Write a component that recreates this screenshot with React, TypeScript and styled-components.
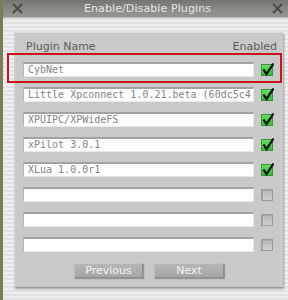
import React from "react";
import styled, { createGlobalStyle } from "styled-components";

const Global = createGlobalStyle`
  html, body { margin: 0; padding: 0; background: #ececec; }
  body { font-family: "DejaVu Sans", sans-serif; }
`;

const Window = styled.div`
  position: relative;
  width: 288px;
  height: 300px;
  overflow: hidden;
  display: flex;
  flex-direction: column;
  border-left: 3px solid #7a7c5a;
  box-sizing: border-box;
  background: repeating-linear-gradient(
    to bottom,
    #efefef 0px,
    #efefef 2px,
    #e2e2e2 2px,
    #e2e2e2 4px
  );
`;

const TitleBar = styled.div`
  height: 17px;
  flex: none;
  display: flex;
  align-items: center;
  justify-content: space-between;
  padding: 0 5px 0 9px;
  background: linear-gradient(to bottom, #75756f, #8c8c87 60%, #96968f);
  border-bottom: 1px solid #b8b8b2;
`;

const Title = styled.div`
  font-family: "DejaVu Sans", sans-serif;
  font-size: 11px;
  color: #e6e6e2;
  line-height: 17px;
  letter-spacing: 0.1px;
`;

const Body = styled.div`
  flex: 1;
  display: flex;
  flex-direction: column;
  padding: 14px 5px 0 11px;
`;

const Panel = styled.div`
  width: 269px;
  height: 255px;
  box-sizing: border-box;
  background: #c9c9c9;
  border-top: 1px solid #dcdcdc;
  border-left: 1px solid #d6d6d6;
  box-shadow: 1px 2px 2px rgba(0, 0, 0, 0.35);
  padding: 7px 10px 9px 8px;
  display: flex;
  flex-direction: column;
`;

const Header = styled.div`
  display: flex;
  justify-content: space-between;
  font-family: "DejaVu Sans", sans-serif;
  font-size: 11px;
  line-height: 13px;
  color: #5c5c5c;
  margin-left: 3px;
  margin-right: -4px;
`;

const Rows = styled.div`
  display: flex;
  flex-direction: column;
  gap: 10px;
  margin-top: 9px;
`;

const Row = styled.div`
  display: flex;
  align-items: center;
  gap: 7px;
  height: 15px;
`;

const Field = styled.div`
  width: 232px;
  height: 15px;
  box-sizing: border-box;
  background: #fdfdfd;
  border-top: 2px solid #a2a2a2;
  border-left: 1px solid #b4b4b4;
  border-right: 1px solid #e4e4e4;
  border-bottom: 1px solid #e8e8e8;
  padding-left: 4px;
  overflow: hidden;
  white-space: nowrap;
  font-family: "DejaVu Sans Mono", monospace;
  font-size: 10px;
  line-height: 12px;
  color: #858585;
`;

const Box = styled.div<{ $on: boolean }>`
  position: relative;
  width: 12px;
  height: 12px;
  box-sizing: border-box;
  border: 1px solid ${(p) => (p.$on ? "#3f8f3f" : "#9a9a9a")};
  background: ${(p) =>
    p.$on
      ? "linear-gradient(to bottom, #5fe05f, #2fbf2f)"
      : "linear-gradient(to bottom, #b8b8b8, #cfcfcf)"};
  box-shadow: ${(p) => (p.$on ? "none" : "inset 1px 1px 0 #a8a8a8")};
`;

const Check = styled.svg`
  position: absolute;
  left: 0px;
  top: -3px;
  width: 12px;
  height: 14px;
`;

const Buttons = styled.div`
  display: flex;
  justify-content: center;
  gap: 11px;
  margin-top: 11px;
  padding-left: 2px;
`;

const Button = styled.button<{ $w: number }>`
  width: ${(p) => p.$w}px;
  height: 15px;
  padding: 0;
  box-sizing: border-box;
  background: linear-gradient(to bottom, #b6b6b6, #a6a6a6);
  border: 1px solid #8e8e8e;
  border-top-color: #c4c4c4;
  border-left-color: #bdbdbd;
  box-shadow: 1px 1px 1px rgba(0, 0, 0, 0.25);
  font-family: "DejaVu Sans", sans-serif;
  font-size: 11px;
  line-height: 13px;
  color: #f4f4f4;
`;

const Highlight = styled.div`
  position: absolute;
  left: 4px;
  top: 53px;
  width: 275px;
  height: 30px;
  box-sizing: border-box;
  border: 2px solid #c8141a;
  pointer-events: none;
`;

const CloseIcon = () => (
  <svg width="11" height="11" viewBox="0 0 11 11">
    <path d="M1 1 L10 10 M10 1 L1 10" stroke="#4a4a48" strokeWidth="2" />
  </svg>
);

const plugins = [
  { name: "CybNet", on: true },
  { name: "Little Xpconnect 1.0.21.beta (60dc5c4", on: true },
  { name: "XPUIPC/XPWideFS", on: true },
  { name: "xPilot 3.0.1", on: true },
  { name: "XLua 1.0.0r1", on: true },
  { name: "", on: false },
  { name: "", on: false },
  { name: "", on: false },
];

export default function App() {
  return (
    <>
      <Global />
      <Window>
        <TitleBar>
          <CloseIcon />
          <Title>Enable/Disable Plugins</Title>
          <CloseIcon />
        </TitleBar>
        <Body>
          <Panel>
            <Header>
              <span>Plugin Name</span>
              <span>Enabled</span>
            </Header>
            <Rows>
              {plugins.map((p, i) => (
                <Row key={i}>
                  <Field>{p.name}</Field>
                  <Box $on={p.on}>
                    {p.on && (
                      <Check viewBox="0 0 12 14">
                        <path
                          d="M1.5 7.5 L4.5 12 L11.5 1.5"
                          fill="none"
                          stroke="#0a0a0a"
                          strokeWidth="2.2"
                          strokeLinejoin="miter"
                        />
                      </Check>
                    )}
                  </Box>
                </Row>
              ))}
            </Rows>
            <Buttons>
              <Button $w={69}>Previous</Button>
              <Button $w={70}>Next</Button>
            </Buttons>
          </Panel>
        </Body>
        <Highlight />
      </Window>
    </>
  );
}
